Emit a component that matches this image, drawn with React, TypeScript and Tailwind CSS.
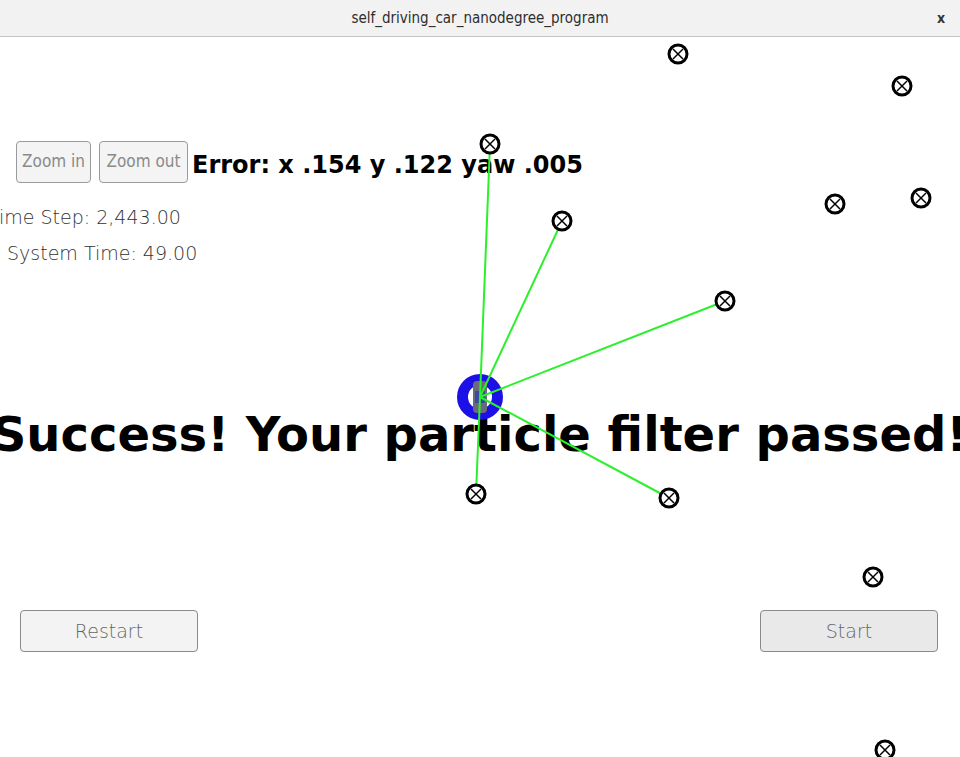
import React from "react";

type Pt = { x: number; y: number };

// landmark positions on the canvas (canvas origin = below title bar)
const landmarks: Pt[] = [
  { x: 678, y: 17 },
  { x: 902, y: 49 },
  { x: 490, y: 107 },
  { x: 562, y: 184 },
  { x: 835, y: 167 },
  { x: 921, y: 161 },
  { x: 725, y: 264 },
  { x: 476, y: 457 },
  { x: 669, y: 461 },
  { x: 873, y: 540 },
  { x: 885, y: 713 },
];

const car: Pt = { x: 480, y: 360 };
const observed = [2, 3, 6, 7, 8];

function Landmark({ p }: { p: Pt }) {
  const d = 5;
  return (
    <g>
      <circle cx={p.x} cy={p.y} r={9} fill="white" stroke="black" strokeWidth={3} />
      <line x1={p.x - d} y1={p.y - d} x2={p.x + d} y2={p.y + d} stroke="black" strokeWidth={1.5} />
      <line x1={p.x - d} y1={p.y + d} x2={p.x + d} y2={p.y - d} stroke="black" strokeWidth={1.5} />
    </g>
  );
}

function Canvas() {
  return (
    <svg className="pointer-events-none absolute left-0 top-0" width={960} height={720}>
      <circle cx={car.x} cy={car.y} r={17.5} fill="none" stroke="#1c10e6" strokeWidth={11} />
      <rect x={car.x - 7} y={car.y - 16} width={14} height={32} rx={4} fill="#6a6a7a" />
      <rect x={car.x - 5} y={car.y - 6} width={10} height={12} fill="#3a4aa0" />
      {observed.map((i) => (
        <line
          key={i}
          x1={car.x}
          y1={car.y}
          x2={landmarks[i].x}
          y2={landmarks[i].y}
          stroke="#2bf02b"
          strokeWidth={2}
        />
      ))}
      {landmarks.map((p, i) => (
        <Landmark key={i} p={p} />
      ))}
    </svg>
  );
}

const btnSmall =
  "h-[42px] rounded-[4px] border border-[#9a9a9a] bg-[#f4f4f4] text-[#8a8a8a] text-[17px] font-['Liberation_Sans_Narrow','DejaVu_Sans_Condensed',sans-serif]";
const btnBig =
  "h-[42px] w-[178px] rounded-[4px] border border-[#8a8a8a] text-[19px] font-extralight text-[#666] font-['DejaVu_Sans',sans-serif]";

export default function App() {
  return (
    <div className="h-[757px] w-[960px] overflow-hidden bg-white">
      <div className="relative flex h-[37px] items-center justify-center border-b border-[#c4c4c4] bg-[#f2f2f2] font-['DejaVu_Sans_Condensed','DejaVu_Sans',sans-serif] text-[15px] text-[#2e2e2e]">
        self_driving_car_nanodegree_program
        <span className="absolute right-[15px] text-[14px] font-bold text-[#333]">x</span>
      </div>

      <div className="relative h-[720px]">
        <div className="flex items-center pl-[16px] pt-[104px]">
          <button className={`${btnSmall} w-[75px]`}>Zoom in</button>
          <button className={`${btnSmall} ml-[8px] w-[89px]`}>Zoom out</button>
          <span className="ml-[4px] mt-[5px] font-['DejaVu_Sans',sans-serif] text-[24px] font-bold text-black">
            Error: x .154 y .122 yaw .005
          </span>
        </div>

        <div className="mt-[16px] ml-[-12px] font-['DejaVu_Sans',sans-serif] text-[19px] font-extralight leading-[36px] text-[#333]">
          <div>Time Step: 2,443.00</div>
          <div className="ml-[19px]">System Time: 49.00</div>
        </div>

        <div className="mt-[135px] flex justify-center whitespace-nowrap font-['DejaVu_Sans',sans-serif] text-[48px] font-bold leading-[56px] text-black">
          <span>Success! Your particle filter passed!</span>
        </div>

        <div className="mt-[148px] flex justify-between px-[20px] pr-[22px]">
          <button className={`${btnBig} bg-[#f3f3f3]`}>Restart</button>
          <button className={`${btnBig} bg-[#e9e9e9]`}>Start</button>
        </div>

        <Canvas />
      </div>
    </div>
  );
}
